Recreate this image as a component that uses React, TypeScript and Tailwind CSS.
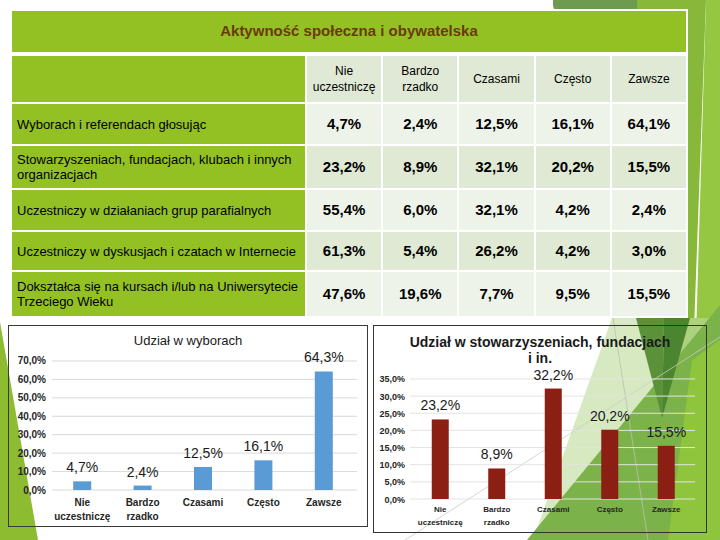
import React from "react";

const columns = ["Nie uczestniczę", "Bardzo rzadko", "Czasami", "Często", "Zawsze"];

const rows = [
  { label: "Wyborach i referendach głosując", values: ["4,7%", "2,4%", "12,5%", "16,1%", "64,1%"], h: "h-[40px]", dark: false },
  { label: "Stowarzyszeniach, fundacjach, klubach i innych organizacjach", values: ["23,2%", "8,9%", "32,1%", "20,2%", "15,5%"], h: "h-[42px]", dark: true },
  { label: "Uczestniczy w działaniach grup parafialnych", values: ["55,4%", "6,0%", "32,1%", "4,2%", "2,4%"], h: "h-[40px]", dark: false },
  { label: "Uczestniczy w dyskusjach i czatach w Internecie", values: ["61,3%", "5,4%", "26,2%", "4,2%", "3,0%"], h: "h-[38px]", dark: true },
  { label: "Dokształca się na kursach i/lub na Uniwersytecie Trzeciego Wieku", values: ["47,6%", "19,6%", "7,7%", "9,5%", "15,5%"], h: "h-[44px]", dark: false },
];

type ChartProps = {
  width: number;
  height: number;
  title: string[];
  titleSize: number;
  titleBold: boolean;
  titleY: number[];
  ticks: number[];
  tickX: number;
  tickSize: number;
  zeroY: number;
  perPct: number;
  gridX: [number, number];
  plotX0: number;
  step: number;
  barW: number;
  color: string;
  values: number[];
  labels: string[];
  labelGap: number;
  catSize: number;
  catY: [number, number];
  gridColor: string;
};

function BarChart(p: ChartProps) {
  const cats = [["Nie", "uczestniczę"], ["Bardzo", "rzadko"], ["Czasami"], ["Często"], ["Zawsze"]];
  return (
    <svg width={p.width} height={p.height} className="block">
      {p.title.map((t, i) => (
        <text key={t} x={p.width / 2} y={p.titleY[i]} textAnchor="middle" fontSize={p.titleSize} fontWeight={p.titleBold ? 700 : 400} fill="#1a1a1a">
          {t}
        </text>
      ))}
      {p.ticks.map((v) => {
        const y = p.zeroY - v * p.perPct;
        return (
          <g key={v}>
            <line x1={p.gridX[0]} x2={p.gridX[1]} y1={y} y2={y} stroke={p.gridColor} strokeWidth={1} />
            <text x={p.tickX} y={y + 3.5} textAnchor="end" fontSize={p.tickSize} fontWeight={700} fill="#262626">
              {v.toFixed(1).replace(".", ",")}%
            </text>
          </g>
        );
      })}
      {p.values.map((v, i) => {
        const cx = p.plotX0 + p.step * (i + 0.5);
        const top = p.zeroY - v * p.perPct;
        return (
          <g key={i}>
            <rect x={cx - p.barW / 2} y={top} width={p.barW} height={v * p.perPct} fill={p.color} />
            <text x={cx} y={top - p.labelGap} textAnchor="middle" fontSize={14} fill="#1a1a1a">
              {p.labels[i]}
            </text>
            {cats[i].map((c, j) => (
              <text key={c} x={cx} y={p.catY[j]} textAnchor="middle" fontSize={p.catSize} fontWeight={700} fill="#262626">
                {c}
              </text>
            ))}
          </g>
        );
      })}
    </svg>
  );
}

function Backdrop() {
  return (
    <svg width={720} height={540} className="absolute inset-0">
      <rect x={553} y={-10} width={90} height={24} rx={9} fill="#6f9b50" />
      <polygon points="637,0 706,0 694,330 640,330" fill="#87b83a" />
      <polygon points="706,0 720,0 720,540 690,540" fill="#95c742" />
      <polygon points="0,322 38,540 0,540" fill="#8dbc30" />
      <polygon points="612,318 720,318 720,540 533,540" fill="#d6e9c0" />
      <polygon points="662,318 720,318 720,410 668,418" fill="#add27f" />
      <polygon points="527,540 720,305 720,540" fill="#7cb24a" />
      <polygon points="692,360 720,340 720,540 668,540" fill="#8ec53d" />
      <polygon points="636,318 664,318 662,418" fill="#5b9239" />
      <polygon points="664,318 690,318 662,418" fill="#4c8530" />
      <line x1={405} y1={540} x2={720} y2={337} stroke="#c9cdc4" strokeWidth={0.8} />
      <line x1={613} y1={318} x2={648} y2={540} stroke="#b9c1b1" strokeWidth={0.8} />
    </svg>
  );
}

export default function App() {
  return (
    <div className="relative w-[720px] h-[540px] overflow-hidden bg-white font-['Liberation_Sans',Arial,sans-serif] text-black">
      <Backdrop />
      <div className="relative flex flex-col">
        <div className="ml-[10px] mt-[9px] w-[678px] bg-white p-[2px] flex flex-col gap-[2px]">
          <div className="h-[41px] mb-[2px] bg-[#93c124] flex items-center justify-center">
            <span className="text-[15px] font-bold text-[#6b3a0a]">Aktywność społeczna i obywatelska</span>
          </div>
          <div className="grid grid-cols-[293px_repeat(5,minmax(0,1fr))] gap-[2px]">
            <div className="h-[46px] bg-[#93c124]" />
            {columns.map((c) => (
              <div key={c} className="h-[46px] bg-[#dfe9d5] flex items-center justify-center text-center text-[12px] leading-[16px] px-1">
                {c === "Nie uczestniczę" ? (
                  <span>Nie<br />uczestniczę</span>
                ) : c === "Bardzo rzadko" ? (
                  <span>Bardzo<br />rzadko</span>
                ) : (
                  c
                )}
              </div>
            ))}
            {rows.map((r) => (
              <React.Fragment key={r.label}>
                <div className={`${r.h} bg-[#93c124] flex items-center pl-[5px] pr-[6px] text-[13px] leading-[15px]`}>{r.label}</div>
                {r.values.map((v, i) => (
                  <div key={i} className={`${r.h} ${r.dark ? "bg-[#dfe9d4]" : "bg-[#eef3ea]"} flex items-center justify-center text-[15px] font-bold`}>
                    {v}
                  </div>
                ))}
              </React.Fragment>
            ))}
          </div>
        </div>
        <div className="flex items-start gap-[5px] ml-[8px] mt-[7px]">
          <div className="border border-[#3a3a3a] w-[360px] h-[202px]">
            <BarChart
              width={358}
              height={200}
              title={["Udział w wyborach"]}
              titleSize={13}
              titleBold={false}
              titleY={[19]}
              ticks={[0, 10, 20, 30, 40, 50, 60, 70]}
              tickX={37}
              tickSize={10}
              zeroY={164}
              perPct={1.843}
              gridX={[43, 348]}
              plotX0={43}
              step={60.4}
              barW={18}
              color="#5b9bd5"
              values={[4.7, 2.4, 12.5, 16.1, 64.3]}
              labels={["4,7%", "2,4%", "12,5%", "16,1%", "64,3%"]}
              labelGap={9}
              catSize={10}
              catY={[180, 194]}
              gridColor="#d9d9d9"
            />
          </div>
          <div className="border border-[#333333] w-[334px] h-[208px]">
            <BarChart
              width={332}
              height={206}
              title={["Udział w stowarzyszeniach, fundacjach", "i in."]}
              titleSize={14}
              titleBold={true}
              titleY={[21, 37]}
              ticks={[0, 5, 10, 15, 20, 25, 30, 35]}
              tickX={31}
              tickSize={9}
              zeroY={173}
              perPct={3.43}
              gridX={[36, 321]}
              plotX0={38}
              step={56.5}
              barW={17}
              color="#8b1f13"
              values={[23.2, 8.9, 32.2, 20.2, 15.5]}
              labels={["23,2%", "8,9%", "32,2%", "20,2%", "15,5%"]}
              labelGap={9}
              catSize={8}
              catY={[186, 199]}
              gridColor="#e3e3e3"
            />
          </div>
        </div>
      </div>
    </div>
  );
}
